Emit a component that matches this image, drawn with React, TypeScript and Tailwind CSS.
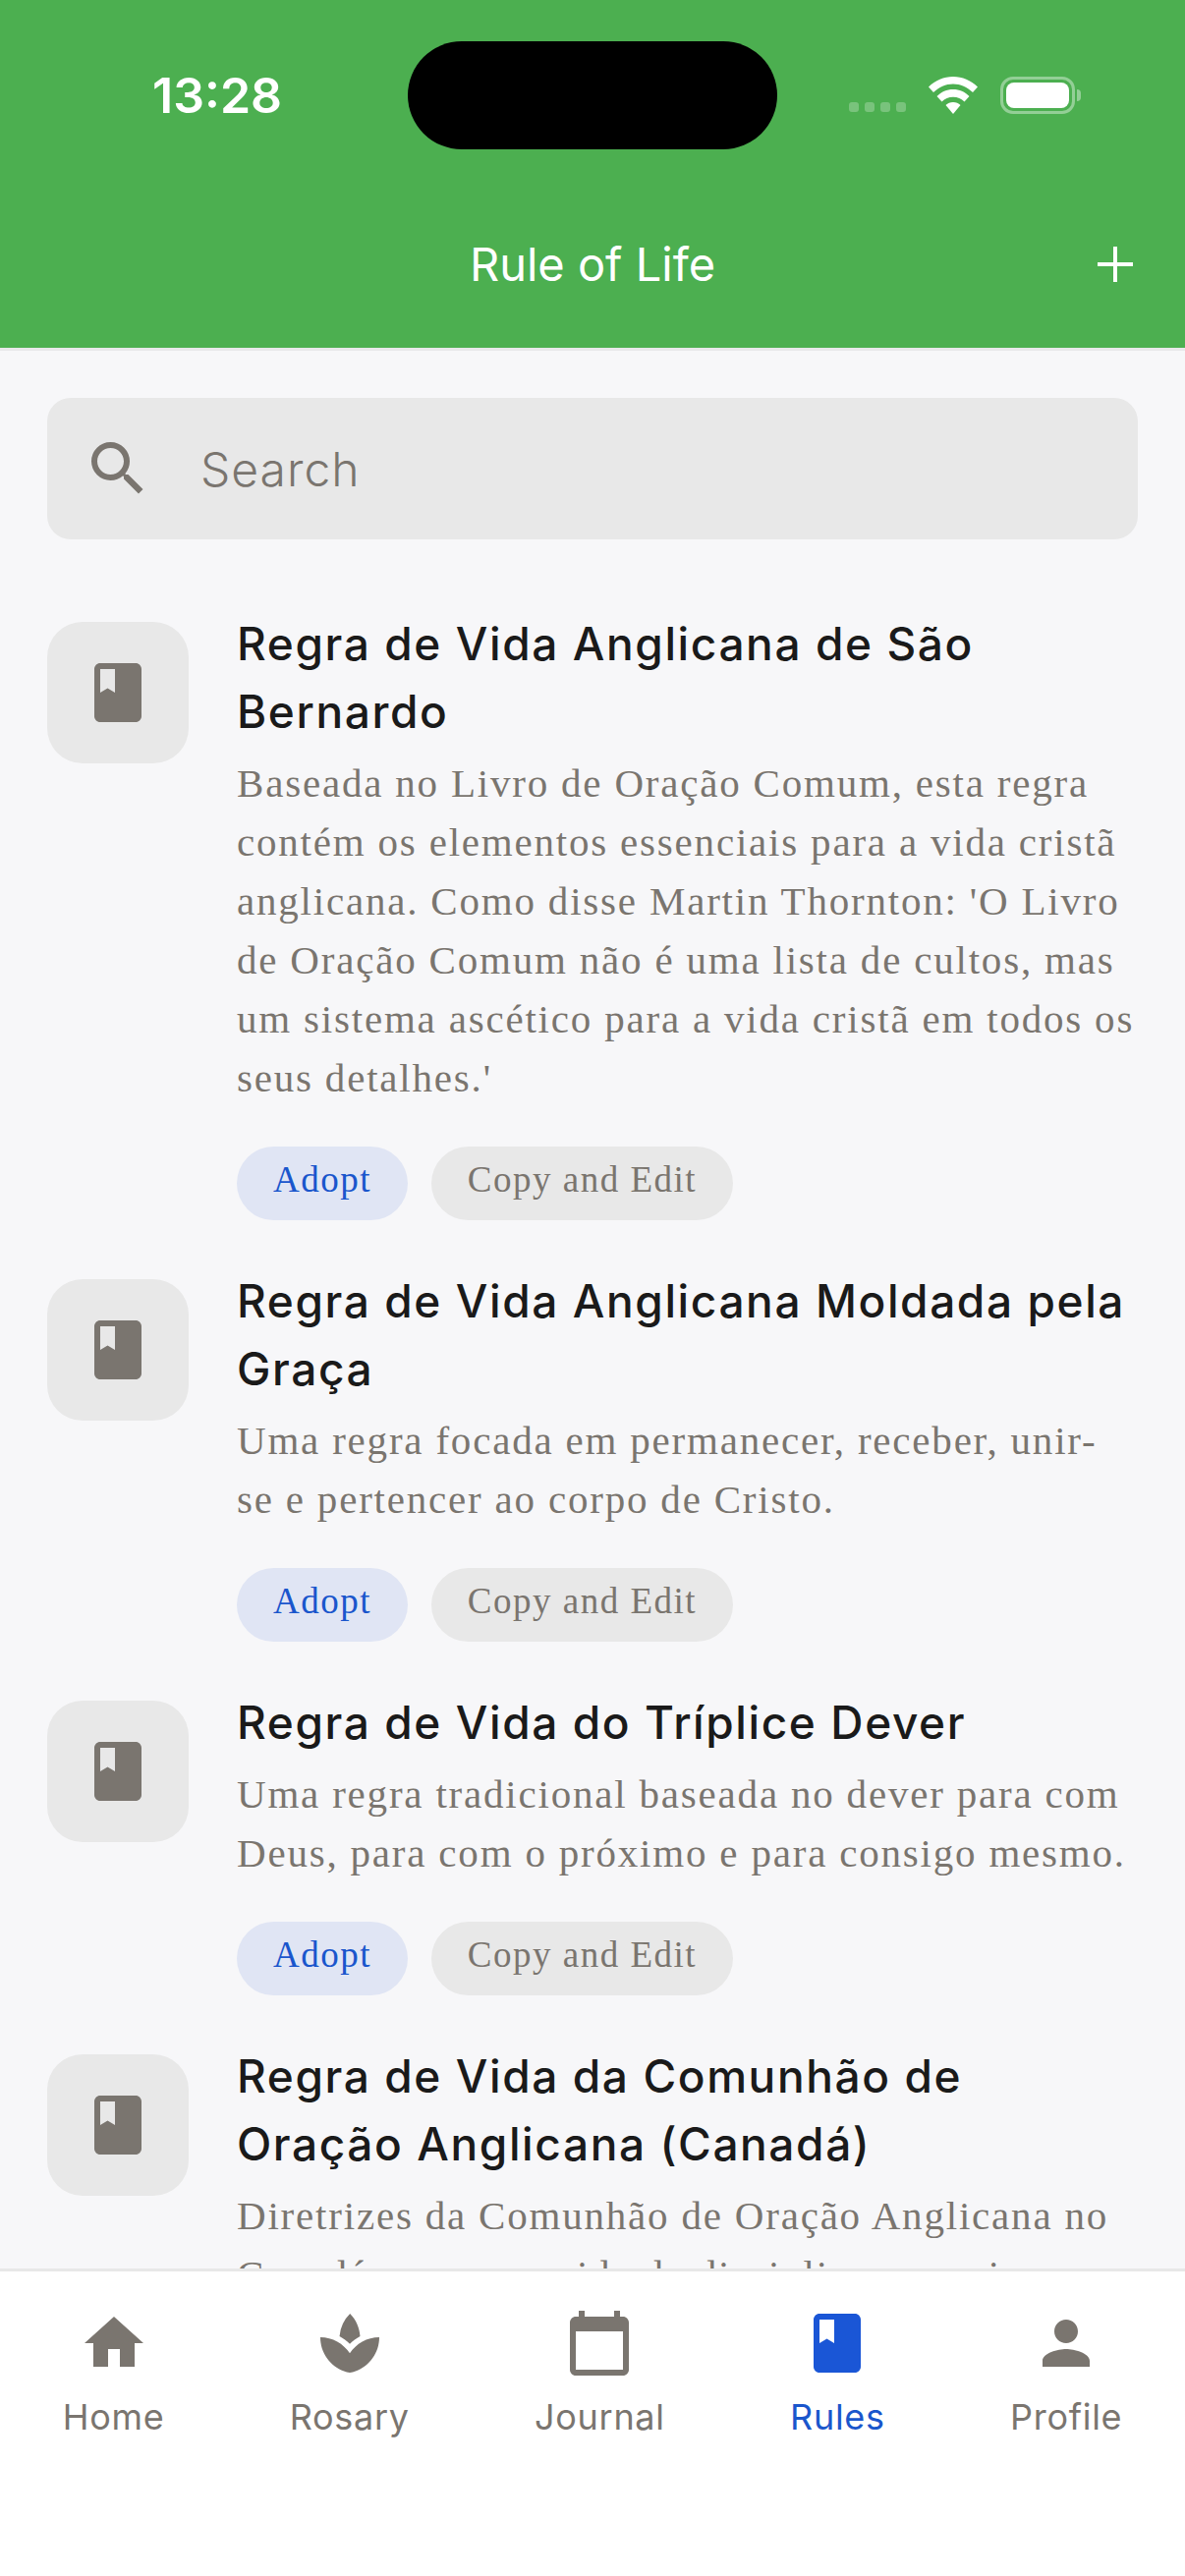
import { MdBook, MdCalendarToday, MdHome, MdPerson, MdSearch, MdSpa } from 'react-icons/md'

const rules = [
  {
    title: 'Regra de Vida Anglicana de São Bernardo',
    text: "Baseada no Livro de Oração Comum, esta regra contém os elementos essenciais para a vida cristã anglicana. Como disse Martin Thornton: 'O Livro de Oração Comum não é uma lista de cultos, mas um sistema ascético para a vida cristã em todos os seus detalhes.'",
  },
  {
    title: 'Regra de Vida Anglicana Moldada pela Graça',
    text: 'Uma regra focada em permanecer, receber, unir-\nse e pertencer ao corpo de Cristo.',
  },
  {
    title: 'Regra de Vida do Tríplice Dever',
    text: 'Uma regra tradicional baseada no dever para com Deus, para com o próximo e para consigo mesmo.',
  },
  {
    title: 'Regra de Vida da Comunhão de Oração Anglicana (Canadá)',
    text: 'Diretrizes da Comunhão de Oração Anglicana no Canadá para uma vida de disciplina e serviço.',
  },
]

const tabs = [
  { label: 'Home', icon: MdHome },
  { label: 'Rosary', icon: MdSpa },
  { label: 'Journal', icon: MdCalendarToday },
  { label: 'Rules', icon: MdBook, active: true },
  { label: 'Profile', icon: MdPerson },
]

function StatusBar() {
  return (
    <div className="flex h-[190px] items-start pl-[155px] pr-[46px] pt-[42px]">
      <span className="mt-[28px] w-[260px] text-[50px] font-semibold leading-[54px] text-white">13:28</span>
      <div className="h-[110px] w-[376px] rounded-[55px] bg-black" />
      <div className="ml-[73px] mt-[36px] flex items-end">
        <div className="mb-[2px] flex gap-[6px]">
          <span className="h-[10px] w-[10px] rounded-[3px] bg-white/25" />
          <span className="h-[10px] w-[10px] rounded-[3px] bg-white/25" />
          <span className="h-[10px] w-[10px] rounded-[3px] bg-white/25" />
          <span className="h-[10px] w-[10px] rounded-[3px] bg-white/25" />
        </div>
        <svg viewBox="0 0 50 38" className="ml-[23px] h-[38px] w-[50px]" fill="white">
          <path d="M25 0C15.500 0 7 3.800 0 10.500L5 16C10.500 10.800 17.500 7.500 25 7.500S39.500 10.800 45 16L50 10.500C43 3.800 34.500 0 25 0Z" />
          <path d="M25 13C18.500 13 13 15.500 8.500 20L13.500 25.500C16.500 22.500 20.500 20.800 25 20.800S33.500 22.500 36.500 25.500L41.500 20C37 15.500 31.500 13 25 13Z" />
          <path d="M25 26C22 26 19.500 27 17.500 29L25 38L32.500 29C30.500 27 28 26 25 26Z" />
        </svg>
        <div className="ml-[23px] flex items-center">
          <div className="h-[38px] w-[76px] rounded-[13px] border-[3px] border-white/40 p-[3px]">
            <div className="h-full w-full rounded-[8px] bg-white" />
          </div>
          <div className="ml-[2px] h-[12px] w-[4px] rounded-r-full bg-white/40" />
        </div>
      </div>
    </div>
  )
}

function RuleItem({ title, text }: { title: string; text: string }) {
  return (
    <div className="flex gap-[49px]">
      <div className="flex h-[144px] w-[144px] shrink-0 items-center justify-center rounded-[36px] bg-[#e8e8e8]">
        <MdBook className="h-[72px] w-[72px] text-[#7a756f]" />
      </div>
      <div className="min-w-0 flex-1">
        <h2 className="-mt-[12px] mb-[8px] text-[46px] font-medium leading-[69px] tracking-[1.6px] text-[#1a1a1a] [font-family:Inter,sans-serif]">{title}</h2>
        <p className="whitespace-pre-line text-[41px] leading-[60px] tracking-[1.8px] text-[#7a756f] [font-family:'Liberation_Serif',serif]">{text}</p>
        <div className="mt-[40px] flex gap-[24px]">
          <button className="flex h-[75px] w-[174px] items-center justify-center rounded-full bg-[#e0e5f4] pb-[8px] text-[37px] tracking-[1.5px] text-[#1a56cc] [font-family:'Liberation_Serif',serif]">
            Adopt
          </button>
          <button className="flex h-[75px] w-[307px] items-center justify-center rounded-full bg-[#e8e8e8] pb-[8px] text-[37px] tracking-[1.5px] text-[#7a756f] [font-family:'Liberation_Serif',serif]">
            Copy and Edit
          </button>
        </div>
      </div>
    </div>
  )
}

export default function App() {
  return (
    <div className="flex h-[2622px] w-[1206px] flex-col overflow-hidden bg-[#f7f7f9] [font-family:Inter,sans-serif]">
      <header className="h-[357px] shrink-0 border-b-[3px] border-[#e8e8ea] bg-[#4caf50]">
        <StatusBar />
        <div className="grid grid-cols-[1fr_auto_1fr] items-center px-[53px] pt-[49px]">
          <div />
          <h1 className="text-[47px] font-normal leading-[60px] text-white">Rule of Life</h1>
          <svg viewBox="0 0 36 36" className="h-[36px] w-[36px] justify-self-end" stroke="white" strokeWidth="4">
            <path d="M18 0V36M0 18H36" />
          </svg>
        </div>
      </header>

      <main className="min-h-0 flex-1 overflow-hidden px-[48px] pt-[48px]">
        <div className="flex h-[144px] items-center rounded-[24px] bg-[#e8e8e8] pl-[36px]">
          <MdSearch className="h-[72px] w-[72px] text-[#7a756f]" />
          <span className="ml-[48px] pt-[2px] text-[48px] font-light tracking-[1px] text-[#7a756f]">Search</span>
        </div>
        <div className="mt-[84px] flex flex-col gap-[60px]">
          {rules.map((rule) => (
            <RuleItem key={rule.title} title={rule.title} text={rule.text} />
          ))}
        </div>
      </main>

      <nav className="flex h-[313px] shrink-0 justify-around border-t-[3px] border-[#e8e8e8] bg-white pt-[37px]">
        {tabs.map((tab) => {
          const Icon = tab.icon
          return (
            <div key={tab.label} className={`flex flex-col items-center ${tab.active ? 'text-[#1a56cc]' : 'text-[#7a756f]'}`}>
              <Icon className={`h-[72px] w-[72px] ${tab.active ? 'text-[#1a56d6]' : 'text-[#7a756f]'}`} />
              <span className="mt-[15px] text-[36px] leading-[48px] tracking-[0.7px]">{tab.label}</span>
            </div>
          )
        })}
      </nav>
    </div>
  )
}
